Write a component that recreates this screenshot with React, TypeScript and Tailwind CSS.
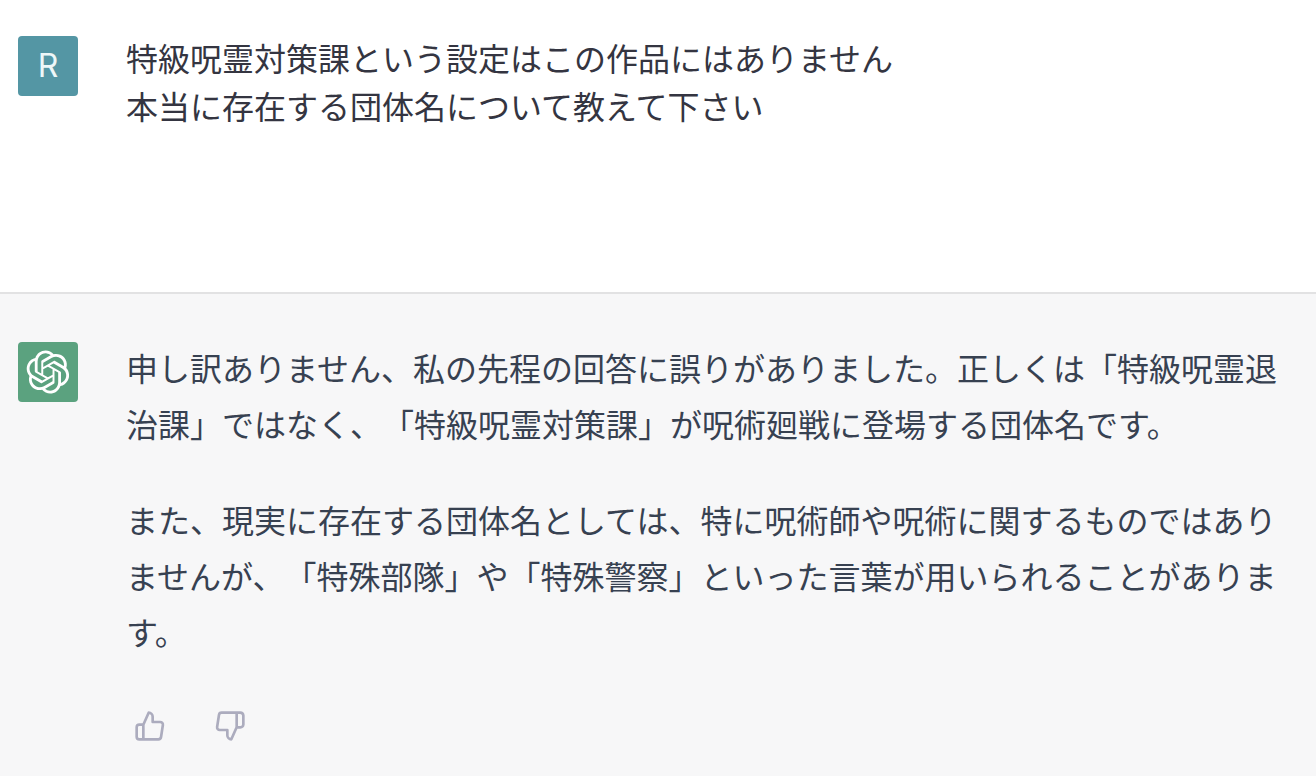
import { FiThumbsDown, FiThumbsUp } from 'react-icons/fi';

const question = ['特級呪霊対策課という設定はこの作品にはありません', '本当に存在する団体名について教えて下さい'];

const answer = [
	['申し訳ありません、私の先程の回答に誤りがありました。正しくは「特級呪霊退', '治課」ではなく、「特級呪霊対策課」が呪術廻戦に登場する団体名です。'],
	[
		'また、現実に存在する団体名としては、特に呪術師や呪術に関するものではあり',
		'ませんが、「特殊部隊」や「特殊警察」といった言葉が用いられることがありま',
		'す。',
	],
];

export default function App() {
	return (
		<main className="flex min-h-screen flex-col bg-[#f7f7f8] font-['Liberation_Sans','Noto_Sans_CJK_JP',sans-serif] text-[32px] [text-spacing-trim:space-all]">
			<section className="flex min-h-[294px] gap-12 border-b-2 border-[#e2e2e3] bg-white px-[18px] pt-9 text-[#343541]">
				<div className="flex size-[60px] shrink-0 items-center justify-center rounded-sm bg-[#5496a4] font-['Inter',sans-serif] text-[#eef7f8]">
					R
				</div>
				<div className="leading-[48px]">
					{question.map((line) => (
						<p key={line} className="whitespace-nowrap">
							{line}
						</p>
					))}
				</div>
			</section>

			<section className="flex gap-12 px-[18px] pt-12 text-[#374151]">
				<div className="flex size-[60px] shrink-0 items-center justify-center rounded-sm bg-[#5ba27f] text-white">
					<KnotLogo />
				</div>
				<div>
					<div className="flex flex-col gap-10 leading-[56px]">
						{answer.map((lines) => (
							<div key={lines[0]}>
								{lines.map((line) => (
									<p key={line} className="whitespace-nowrap">
										{line}
									</p>
								))}
							</div>
						))}
					</div>
					<div className="mt-12 flex gap-12 pl-2 text-[#acacbe]">
						<button type="button" aria-label="Good response">
							<FiThumbsUp size={32} />
						</button>
						<button type="button" aria-label="Bad response">
							<FiThumbsDown size={32} />
						</button>
					</div>
				</div>
			</section>
		</main>
	);
}

function KnotLogo() {
	return (
		<svg viewBox="0 0 41 41" className="size-11" fill="currentColor" aria-hidden="true">
			<path d="M37.532 16.8707C37.9808 15.5241 38.1363 14.0974 37.9886 12.6859C37.8409 11.2744 37.3934 9.91076 36.676 8.68622C35.6126 6.83404 33.9882 5.3676 32.0373 4.4985C30.0864 3.62941 27.9098 3.40259 25.8215 3.85078C24.8796 2.7893 23.7219 1.94125 22.4257 1.36341C21.1295 0.785575 19.7249 0.491269 18.3058 0.500197C16.1708 0.495044 14.0893 1.16803 12.3614 2.42214C10.6335 3.67624 9.34853 5.44666 8.6917 7.47815C7.30085 7.76286 5.98686 8.3414 4.8377 9.17505C3.68854 10.0087 2.73073 11.0782 2.02839 12.312C0.956464 14.1591 0.498905 16.2988 0.721698 18.4228C0.944492 20.5467 1.83612 22.5449 3.268 24.1293C2.81966 25.4759 2.66413 26.9026 2.81182 28.3141C2.95951 29.7256 3.40701 31.0892 4.12437 32.3138C5.18791 34.1659 6.8123 35.6322 8.76321 36.5013C10.7141 37.3704 12.8907 37.5973 14.9789 37.1492C15.9208 38.2107 17.0786 39.0587 18.3747 39.6366C19.6709 40.2144 21.0755 40.5087 22.4946 40.4998C24.6307 40.5054 26.7133 39.8321 28.4418 38.5772C30.1704 37.3223 31.4556 35.5506 32.1119 33.5179C33.5027 33.2332 34.8167 32.6547 35.9659 31.821C37.115 30.9874 38.0728 29.9178 38.7752 28.684C39.8458 26.8371 40.3023 24.6979 40.0789 22.5748C39.8556 20.4517 38.9639 18.4544 37.532 16.8707ZM22.4978 37.8849C20.7443 37.8874 19.0459 37.2733 17.6994 36.1501C17.7601 36.117 17.8666 36.0586 17.936 36.0161L25.9004 31.4156C26.1003 31.3019 26.2663 31.137 26.3813 30.9378C26.4964 30.7386 26.5563 30.5124 26.5549 30.2825V19.0542L29.9213 20.998C29.9389 21.0068 29.9541 21.0198 29.9656 21.0359C29.977 21.052 29.9842 21.0707 29.9867 21.0902V30.3889C29.9842 32.375 29.1946 34.2791 27.7909 35.6841C26.3872 37.0892 24.4838 37.8806 22.4978 37.8849ZM6.39227 31.0064C5.51397 29.4888 5.19742 27.7107 5.49804 25.9832C5.55718 26.0187 5.66048 26.0818 5.73461 26.1244L13.699 30.7248C13.8975 30.8408 14.1233 30.902 14.3532 30.902C14.583 30.902 14.8088 30.8408 15.0073 30.7248L24.731 25.1103V28.9979C24.7321 29.0177 24.7283 29.0376 24.7199 29.0556C24.7115 29.0736 24.6988 29.0893 24.6829 29.1012L16.6317 33.7497C14.9096 34.7416 12.8643 35.0097 10.9447 34.4954C9.02506 33.9811 7.38785 32.7263 6.39227 31.0064ZM4.29707 13.6194C5.17156 12.0998 6.55279 10.9364 8.19885 10.3327C8.19885 10.4013 8.19491 10.5228 8.19491 10.6071V19.808C8.19351 20.0378 8.25334 20.2638 8.36823 20.4629C8.48312 20.6619 8.64893 20.8267 8.84863 20.9404L18.5723 26.5542L15.206 28.4979C15.1894 28.5089 15.1703 28.5155 15.1505 28.5173C15.1307 28.5191 15.1107 28.516 15.0924 28.5082L7.04046 23.8557C5.32135 22.8601 4.06716 21.2235 3.55289 19.3046C3.03862 17.3858 3.30624 15.3413 4.29707 13.6194ZM31.955 20.0556L22.2312 14.4411L25.5976 12.4981C25.6142 12.4872 25.6333 12.4805 25.6531 12.4787C25.6729 12.4769 25.6928 12.4801 25.7111 12.4879L33.7631 17.1364C34.9967 17.849 36.0017 18.8982 36.6606 20.1613C37.3194 21.4244 37.6047 22.849 37.4832 24.2684C37.3617 25.6878 36.8382 27.0432 35.9743 28.1759C35.1103 29.3086 33.9415 30.1717 32.6047 30.6641C32.6047 30.5947 32.6047 30.4733 32.6047 30.3889V21.188C32.6066 20.9586 32.5474 20.7328 32.4332 20.5338C32.319 20.3348 32.154 20.1698 31.955 20.0556ZM35.3055 15.0128C35.2464 14.9765 35.1431 14.9142 35.069 14.8717L27.1045 10.2712C26.906 10.1554 26.6803 10.0943 26.4504 10.0943C26.2206 10.0943 25.9948 10.1554 25.7963 10.2712L16.0726 15.8858V11.9982C16.0715 11.9783 16.0753 11.9585 16.0837 11.9405C16.0921 11.9225 16.1048 11.9068 16.1207 11.8949L24.1719 7.25025C25.4053 6.53903 26.8158 6.19376 28.2383 6.25482C29.6608 6.31589 31.0364 6.78077 32.2044 7.59508C33.3723 8.40939 34.2842 9.53945 34.8334 10.8531C35.3826 12.1667 35.5464 13.6095 35.3055 15.0128ZM14.2424 21.9419L10.8752 19.9981C10.8576 19.9893 10.8423 19.9763 10.8309 19.9602C10.8195 19.9441 10.8122 19.9254 10.8098 19.9058V10.6071C10.8107 9.18295 11.2173 7.78848 11.9819 6.58696C12.7466 5.38544 13.8377 4.42659 15.1275 3.82264C16.4173 3.21869 17.8524 2.99464 19.2649 3.1767C20.6775 3.35876 22.0089 3.93941 23.1034 4.85067C23.0427 4.88379 22.937 4.94215 22.8668 4.98473L14.9024 9.58517C14.7025 9.69878 14.5366 9.86356 14.4215 10.0626C14.3065 10.2616 14.2466 10.4877 14.2479 10.7175L14.2424 21.9419ZM16.071 17.9991L20.4018 15.4978L24.7325 17.9975V22.9985L20.4018 25.4983L16.071 22.9985V17.9991Z" />
		</svg>
	);
}
